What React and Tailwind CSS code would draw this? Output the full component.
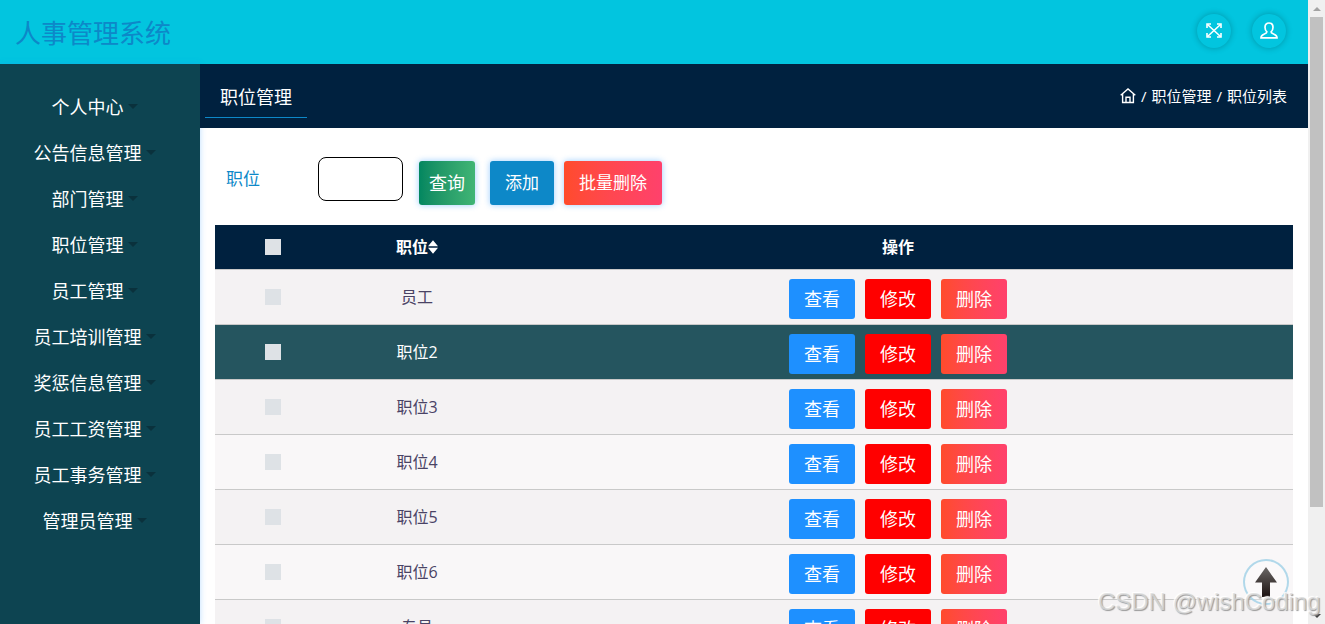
import React, { useState } from 'react';

const menus = [
  '个人中心',
  '公告信息管理',
  '部门管理',
  '职位管理',
  '员工管理',
  '员工培训管理',
  '奖惩信息管理',
  '员工工资管理',
  '员工事务管理',
  '管理员管理',
];

const positions = ['员工', '职位2', '职位3', '职位4', '职位5', '职位6', '专员'];

const FullscreenIcon = () => (
  <svg width="16" height="15" viewBox="0 0 16 15" fill="none" stroke="white" strokeWidth="1.6">
    <path d="M1 5V1H5M11 1H15V5M15 10V14H11M5 14H1V10" />
    <path d="M1.5 1.5L14.5 13.5M14.5 1.5L1.5 13.5" />
  </svg>
);

const UserIcon = () => (
  <svg width="18" height="17" viewBox="0 0 18 17" fill="none" stroke="white" strokeWidth="1.7">
    <path d="M6.9 9.8C5.6 8.7 5 7 5 5.2C5 2.5 6.6 1 9 1C11.4 1 13 2.5 13 5.2C13 7 12.4 8.7 11.1 9.8C11.1 11.3 12 11.5 14 12.2C16 13 17 13.8 17 15.8H1C1 13.8 2 13 4 12.2C6 11.5 6.9 11.3 6.9 9.8Z" />
  </svg>
);

const HomeIcon = () => (
  <svg width="16" height="16" viewBox="0 0 16 16" fill="none" stroke="white" strokeWidth="1.4">
    <path d="M0.7 7.2L8 1L15.3 7.2M2.6 6V14.5H13.4V6" />
    <path d="M6 14.5V9.3H10V14.5" />
  </svg>
);

const SortIcon = () => (
  <svg width="10" height="14" viewBox="0 0 10 14" fill="white">
    <path d="M5 0.3L10 6.3H0ZM0 7.7H10L5 13.7Z" />
  </svg>
);

const Checkbox = () => (
  <span className="block w-4 h-4 bg-[#dee2e6]" />
);

const Header = () => (
  <header className="h-16 shrink-0 bg-[#02c5df] flex items-center justify-between pl-[15px] pr-[22px]">
    <h1 className="text-[26px] leading-none text-[#0d88c8] pt-0.5">人事管理系统</h1>
    <div className="flex items-center gap-[21px] pb-[3px]">
      <button className="w-[34px] h-[34px] rounded-full flex items-center justify-center shadow-[0_0_6px_rgba(0,0,0,0.25)]">
        <FullscreenIcon />
      </button>
      <button className="w-[34px] h-[34px] rounded-full flex items-center justify-center shadow-[0_0_6px_rgba(0,0,0,0.25)]">
        <UserIcon />
      </button>
    </div>
  </header>
);

const Sidebar = () => (
  <aside className="w-[200px] shrink-0 bg-[#0d4451] pt-5 pr-[11px] shadow-[0_0_6px_rgba(30,144,255,0.3)]">
    {menus.map((name) => (
      <div key={name} className="h-[46px] flex items-center justify-center gap-1 text-lg text-white whitespace-nowrap">
        <span>{name}</span>
        <span className="border-x-[5px] border-t-[5px] border-x-transparent border-t-[#0a313c] mb-0.5" />
      </div>
    ))}
  </aside>
);

const RowButtons = () => (
  <div className="flex justify-center gap-2.5 text-lg leading-10 text-white">
    <button className="w-[66px] h-10 rounded-[3px] bg-[#1e90ff]">查看</button>
    <button className="w-[66px] h-10 rounded-[3px] bg-[#ff0000]">修改</button>
    <button className="w-[66px] h-10 rounded-[3px] bg-linear-to-r from-[#ff4b2b] to-[#ff416c]">删除</button>
  </div>
);

const PositionTable = ({ active, onHover }) => (
  <div className="mt-5 text-base">
    <div className="h-11 grid grid-cols-[116px_172px_1fr] items-center justify-items-center bg-[#00213f] text-white font-bold">
      <Checkbox />
      <div className="flex items-center">
        <span>职位</span>
        <SortIcon />
      </div>
      <span>操作</span>
    </div>
    {positions.map((name, i) => (
      <div
        key={name}
        onMouseEnter={() => onHover(i)}
        className={`h-[55px] border-t border-[#c9c9c9] grid grid-cols-[116px_172px_1fr] items-center justify-items-center ${
          i === active
            ? 'bg-[#25555f] text-white'
            : i % 2 === 0
              ? 'bg-[#f4f2f3] text-[#4a4365]'
              : 'bg-[#f9f7f8] text-[#4a4365]'
        }`}
      >
        <Checkbox />
        <span>{name}</span>
        <div className="pt-[5px] -mt-px">
          <RowButtons />
        </div>
      </div>
    ))}
  </div>
);

const Scrollbar = () => (
  <div className="w-[17px] shrink-0 bg-[#f0f0f0] flex flex-col items-center">
    <div className="h-[17px] flex items-center">
      <svg width="8" height="4" viewBox="0 0 8 4" fill="#a3a3a3">
        <path d="M4 0L8 4H0Z" />
      </svg>
    </div>
    <div className="w-[13px] h-[490px] bg-[#c1c1c1]" />
    <div className="flex-1" />
    <div className="h-[17px] flex items-center">
      <svg width="8" height="4" viewBox="0 0 8 4" fill="#404040">
        <path d="M4 4L8 0H0Z" />
      </svg>
    </div>
  </div>
);

const App = () => {
  const [active, setActive] = useState(1);

  return (
    <div className="relative w-[1325px] h-[624px] flex overflow-hidden bg-white font-['Open_Sans','Noto_Sans_CJK_SC',sans-serif]">
      <div className="flex-1 min-w-0 flex flex-col">
        <Header />
        <div className="flex-1 min-h-0 flex">
          <Sidebar />
          <main className="flex-1 min-w-0">
            {/* Breadcrumb bar */}
            <div className="h-16 bg-[#00213f] text-white flex justify-between pl-[5px] pr-[21px]">
              <div className="w-[102px] h-[54px] border-b border-[#0d88c8] flex items-center justify-center text-lg pt-3">
                职位管理
              </div>
              <div className="flex items-center text-[15px] gap-[5px] pt-px">
                <span className="pb-px">
                  <HomeIcon />
                </span>
                <span>/</span>
                <span>职位管理</span>
                <span>/</span>
                <span>职位列表</span>
              </div>
            </div>

            <div className="px-[15px] pt-[29px]">
              {/* Search form */}
              <div className="h-12 flex text-[17px] text-white">
                <label className="w-[103px] pl-[11px] leading-[44px] text-[#0d88c8]">职位</label>
                <input className="w-[85px] h-11 border border-black rounded-lg bg-white" />
                <button className="mt-1 ml-4 w-14 h-11 rounded-[3px] text-lg bg-linear-to-r from-[#028760] to-[#40b575] shadow-[0_0_6px_rgba(30,144,255,0.45)]">查询</button>
                <button className="mt-1 ml-[15px] w-16 h-11 rounded-[3px] bg-[#0d88c8] shadow-[0_0_6px_rgba(30,144,255,0.45)]">添加</button>
                <button className="mt-1 ml-2.5 w-[98px] h-11 rounded-[3px] bg-linear-to-r from-[#ff4b2b] to-[#ff416c] shadow-[0_0_6px_rgba(30,144,255,0.45)]">批量删除</button>
              </div>

              <PositionTable active={active} onHover={setActive} />
            </div>
          </main>
        </div>
      </div>
      <Scrollbar />

      {/* Back to top */}
      <button className="absolute left-[1243px] top-[559px] w-[46px] h-[46px] rounded-full border-2 border-[#9fcfe6]/80 bg-white/30 flex items-center justify-center">
        <svg width="22" height="30" viewBox="0 0 22 30">
          <defs>
            <linearGradient id="arrow" x1="0" y1="0" x2="0" y2="1">
              <stop offset="0" stopColor="#6b6867" />
              <stop offset="1" stopColor="#1c1110" />
            </linearGradient>
          </defs>
          <path d="M11 0L22 15.5H15V30H7V15.5H0Z" fill="url(#arrow)" />
        </svg>
      </button>

      <span className="absolute left-[1098px] top-[587px] text-[24px] leading-[30px] tracking-[-0.05px] whitespace-nowrap font-['Liberation_Sans',sans-serif] text-[#dcdcdc]/80 [text-shadow:1px_1px_1px_#999,-1px_-1px_1px_#fff] pointer-events-none">
        CSDN @wishCoding
      </span>
    </div>
  );
};

export default App;
